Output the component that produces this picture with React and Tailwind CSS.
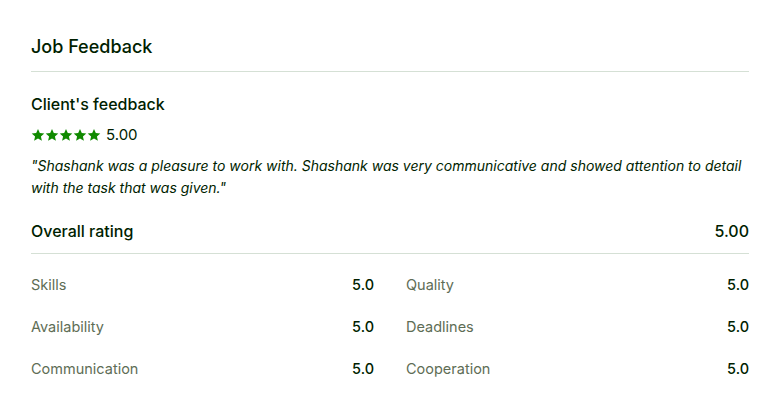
const Star = () => (
  <svg viewBox="0 0 24 24" className="w-[14px] h-[14px]" fill="#108a00">
    <path d="M12 1.5l3.1 7.1 7.7.7-5.8 5.1 1.7 7.6L12 18l-6.7 4 1.7-7.6-5.8-5.1 7.7-.7z" />
  </svg>
);

const ratings = [
  ["Skills", "5.0", "Quality", "5.0"],
  ["Availability", "5.0", "Deadlines", "5.0"],
  ["Communication", "5.0", "Cooperation", "5.0"],
];

const App = () => {
  return (
    <div className="bg-white min-h-screen pl-[31px] pr-[19px] pt-[35px] text-[#001e00] font-['Inter',sans-serif]">
      <h2 className="text-[18px] leading-6 font-medium">Job Feedback</h2>
      <div className="mt-3 border-t border-[#d5e0d5]" />
      <h3 className="mt-5 text-[16px] leading-6 font-medium">Client's feedback</h3>
      <div className="mt-[9px] flex items-center gap-[5px] h-5">
        <div className="flex">
          {[0, 1, 2, 3, 4].map((i) => (
            <Star key={i} />
          ))}
        </div>
        <span className="text-[15px]">5.00</span>
      </div>
      <p className="mt-[10px] text-[14px] leading-[22px] italic">
        "Shashank was a pleasure to work with. Shashank was very communicative and showed attention to detail
        with the task that was given."
      </p>
      <div className="mt-5 pb-[10px] border-b border-[#d5e0d5] flex justify-between text-[16px] leading-6 font-medium">
        <span>Overall rating</span>
        <span>5.00</span>
      </div>
      <div className="mt-5 grid grid-cols-2 gap-x-8 gap-y-5 text-[14.5px] leading-[22px]">
        {ratings.map((r) => (
          <div key={r[0]} className="contents">
            <div className="flex justify-between">
              <span className="text-[#5e6d55]">{r[0]}</span>
              <span className="font-medium">{r[1]}</span>
            </div>
            <div className="flex justify-between">
              <span className="text-[#5e6d55]">{r[2]}</span>
              <span className="font-medium">{r[3]}</span>
            </div>
          </div>
        ))}
      </div>
    </div>
  );
};

export default App;
